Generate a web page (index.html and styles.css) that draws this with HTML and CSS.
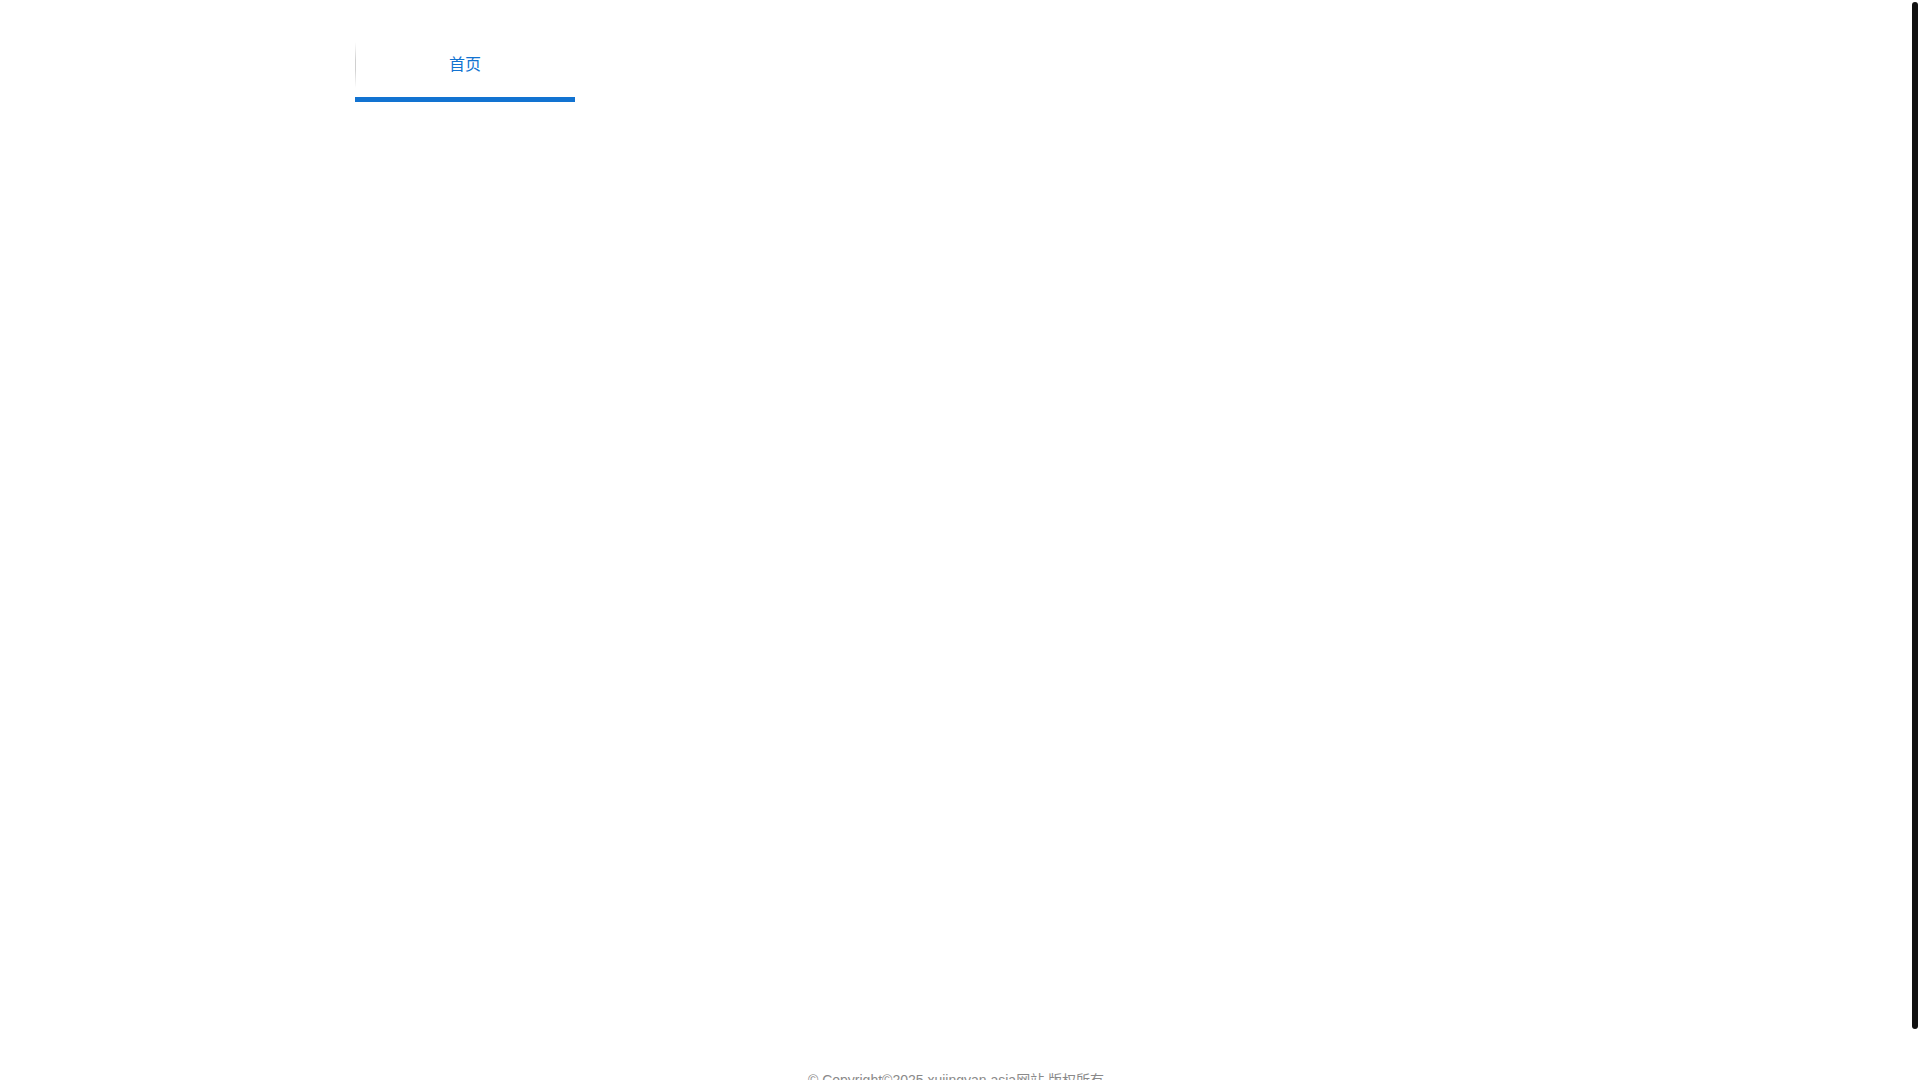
FILE: index.html
```html
<!DOCTYPE html>
<html lang="zh-CN">
<head>
<meta charset="utf-8">
<title>首页</title>
<link rel="stylesheet" href="styles.css">
</head>
<body>
<div class="page">
  <header class="header">
    <nav class="nav">
      <a class="tab tab-active" href="#">首页</a>
    </nav>
  </header>
  <main class="main"></main>
  <footer class="footer">© Copyright©2025 xujingyan.asia网站 版权所有</footer>
</div>
<div class="scrollbar"><div class="scrollbar-thumb"></div></div>
</body>
</html>
```
FILE: styles.css
```css
html {
  background: #fff;
  scrollbar-width: none;
}
html::-webkit-scrollbar {
  display: none;
}
body {
  margin: 0;
  font-family: "Liberation Sans", Arial, "Noto Sans CJK SC", sans-serif;
  color: #333;
}
.page {
  margin-right: 8px;
}
.header {
  padding-top: 42px;
}
.nav {
  width: 1202px;
  margin: 0 auto;
  display: flex;
}
.tab {
  position: relative;
  width: 220px;
  box-sizing: border-box;
  padding: 12px 0 21px;
  line-height: 22px;
  font-size: 16px;
  text-align: center;
  text-decoration: none;
  color: #1273d1;
  border-bottom: 5px solid #1273d1;
}
.tab::before {
  content: "";
  position: absolute;
  left: 0;
  top: 0;
  width: 1px;
  height: 46px;
  background: linear-gradient(to bottom, rgba(200,200,200,0), #d0d0d0 40%, #d0d0d0 60%, rgba(200,200,200,0));
}
.main {
  height: 960px;
}
.footer {
  padding: 8px 0 42px;
  font-size: 14px;
  line-height: 20px;
  text-align: center;
  color: #8a8a8a;
}
.scrollbar {
  position: fixed;
  top: 0;
  right: 0;
  width: 8px;
  height: 100vh;
  background: #fff;
}
.scrollbar-thumb {
  margin-top: 2px;
  width: 6px;
  height: 1027px;
  background: #111;
  border-radius: 3px;
}
```
